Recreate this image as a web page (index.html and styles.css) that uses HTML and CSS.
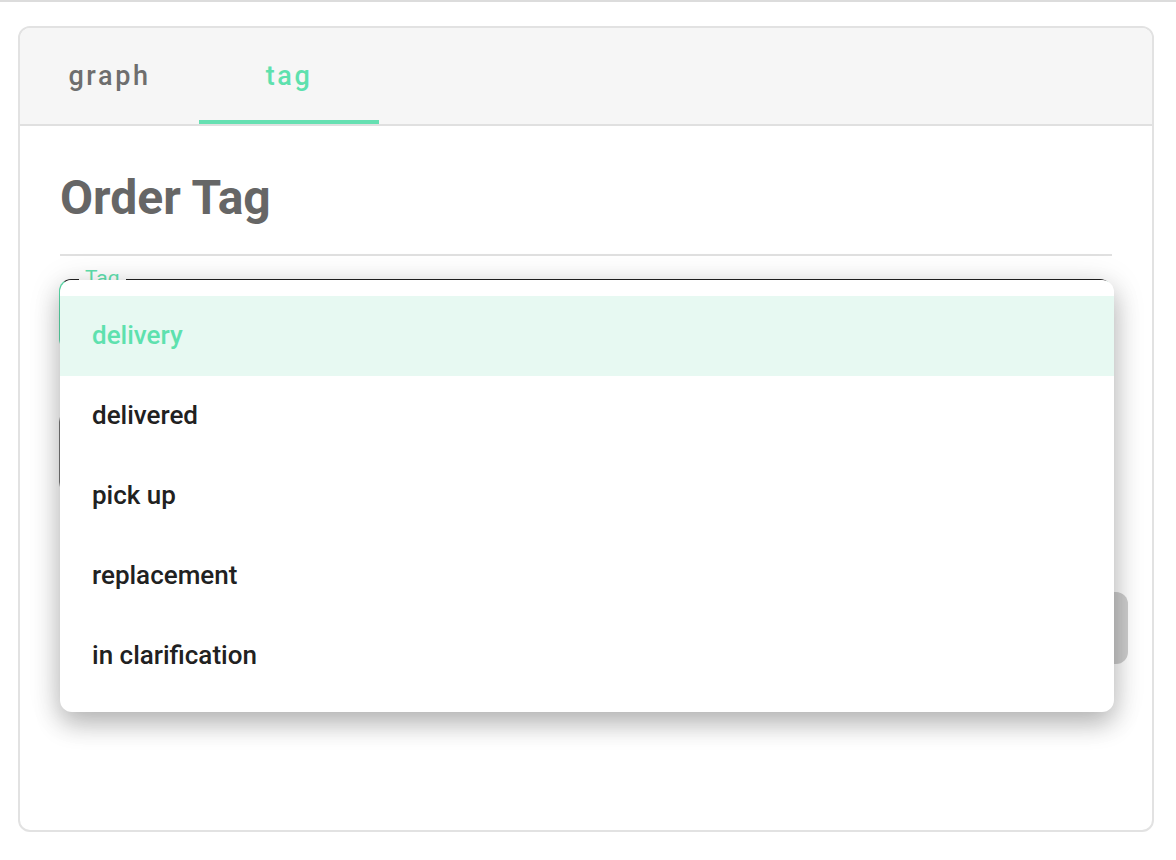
FILE: index.html
```html
<!DOCTYPE html>
<html lang="en">
<head>
    <meta charset="UTF-8">
    <meta name="viewport" content="width=device-width, initial-scale=1.0">
    <title>Order Tag</title>
    <link rel="stylesheet" href="styles.css">
</head>
<body>

    <div class="topbar"></div>

    <div class="card">
        <div class="tabs">
            <div class="tab">graph</div>
            <div class="tab active">tag</div>
        </div>

        <div class="content">
            <h1>Order Tag</h1>
            <hr>

            <div class="field focused">
                <span class="field-label">Tag</span>

                <ul class="menu">
                    <li class="option selected">delivery</li>
                    <li class="option">delivered</li>
                    <li class="option">pick up</li>
                    <li class="option">replacement</li>
                    <li class="option">in clarification</li>
                </ul>
            </div>

            <div class="field"></div>

            <div class="actions">
                <button class="save">Save</button>
            </div>
        </div>
    </div>

</body>
</html>
```

FILE: styles.css
```css
body {
    margin: 0;
    font-family: Roboto, "Liberation Sans", sans-serif;
    background: #fff;
}

.topbar {
    height: 2px;
    background: #dcdcdc;
}

.card {
    box-sizing: border-box;
    height: 806px;
    margin: 24px 22px 0 18px;
    border: 2px solid #e2e2e2;
    border-radius: 12px;
}

.tabs {
    display: flex;
    height: 96px;
    background: #f6f6f6;
    border-bottom: 2px solid #e0e0e0;
    border-radius: 10px 10px 0 0;
}

.tab {
    position: relative;
    width: 180px;
    display: flex;
    align-items: center;
    justify-content: center;
    font-size: 27px;
    font-weight: 500;
    letter-spacing: 2.6px;
    color: #6e6e6e;
}

.tab:first-child {
    width: 179px;
}

.tab.active {
    color: #5ee1ae;
}

.tab.active::after {
    content: "";
    position: absolute;
    left: 0;
    right: 0;
    bottom: 0;
    height: 4px;
    background: #66e0b2;
}

.content {
    padding: 44px 40px 0;
}

h1 {
    margin: 0;
    font-size: 48px;
    line-height: 56px;
    font-weight: 700;
    color: #666;
}

hr {
    margin: 28px 0 0;
    border: 0;
    height: 2px;
    background: #e0e0e0;
}

.field {
    position: relative;
    box-sizing: border-box;
    height: 84px;
    margin: 59px 0 0 -1px;
    border: 1px solid #7a7a7a;
    border-radius: 12px;
}

.field.focused {
    height: 72px;
    margin-top: 23px;
    border: 2px solid #5ee1ae;
    border-top: 1px solid #222;
}

.field-label {
    position: absolute;
    top: -14px;
    left: 18px;
    padding: 0 6px;
    background: #fff;
    font-size: 21px;
    line-height: 24px;
    color: #5ee1ae;
}

.menu {
    position: absolute;
    top: 0;
    left: -1px;
    right: -4px;
    z-index: 10;
    margin: 0;
    padding: 16px 0;
    list-style-type: none;
    background: #fff;
    border-radius: 12px;
    box-shadow: 0 12px 26px rgba(0, 0, 0, 0.24), 0 3px 34px rgba(0, 0, 0, 0.12);
}

.option {
    height: 80px;
    display: flex;
    align-items: center;
    padding-left: 32px;
    padding-bottom: 3px;
    box-sizing: border-box;
    font-size: 26px;
    font-weight: 500;
    color: #212121;
}

.option.selected {
    background: #e7f9f2;
    color: #5ee1ae;
}

.actions {
    display: flex;
    justify-content: flex-end;
    margin-top: 98px;
}

.save {
    width: 240px;
    height: 72px;
    margin-right: -16px;
    border: 0;
    border-radius: 12px;
    background: #cfcfcf;
    font-family: inherit;
    font-size: 22px;
    color: #fff;
}
```
